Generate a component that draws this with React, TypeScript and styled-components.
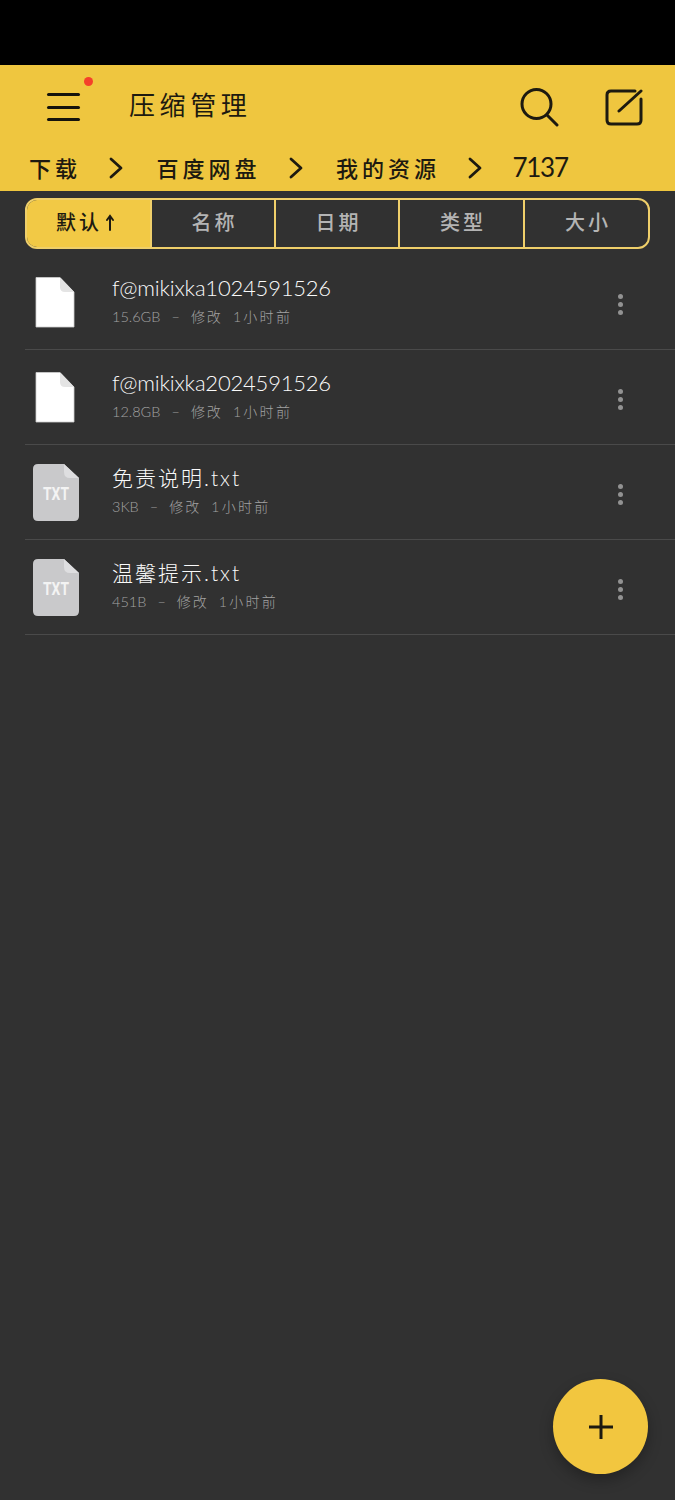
import React from "react";
import styled, { createGlobalStyle } from "styled-components";

const Global = createGlobalStyle`
  html, body { margin: 0; padding: 0; background: #313131; }
  * { box-sizing: border-box; }
`;

const CJK = `"Noto Sans CJK SC", "Noto Sans", sans-serif`;
const LATIN = `Lato, "Noto Sans CJK SC", sans-serif`;

const Page = styled.div`
  position: relative;
  width: 675px;
  height: 1500px;
  overflow: hidden;
  background: #313131;
  font-family: ${CJK};
`;
const StatusBar = styled.div`
  height: 65px;
  background: #000;
`;
const Header = styled.header`
  height: 126px;
  background: #efc63f;
  color: #1d1a10;
  display: flex;
  flex-direction: column;
`;
const TopRow = styled.div`
  height: 83px;
  display: flex;
  align-items: center;
  padding: 0 32px 0 47px;
`;
const MenuButton = styled.div`
  position: relative;
  width: 33px;
  height: 28px;
  display: flex;
  flex-direction: column;
  justify-content: space-between;
  margin-top: 1px;
`;
const MenuLine = styled.span`
  display: block;
  height: 3px;
  border-radius: 2px;
  background: #15130c;
`;
const Dot = styled.span`
  position: absolute;
  top: -16px;
  left: 37px;
  width: 9px;
  height: 9px;
  border-radius: 50%;
  background: #f4402a;
`;
const Title = styled.h1`
  margin: -5px 0 0 49px;
  font-size: 26px;
  font-weight: 400;
  letter-spacing: 4.6px;
  line-height: 34px;
  flex: 1;
`;
const IconButton = styled.div`
  width: 40px;
  height: 40px;
  margin-left: 44px;
  svg { display: block; }
`;
const Crumbs = styled.nav`
  height: 43px;
  display: flex;
  align-items: center;
  padding-left: 29px;
  margin-top: -3px;
`;
const Crumb = styled.span`
  font-size: 22px;
  font-weight: 500;
  letter-spacing: 4px;
  line-height: 30px;
  white-space: nowrap;
`;
const CrumbNumber = styled.span`
  font-family: ${LATIN};
  font-size: 26px;
  font-weight: 400;
  letter-spacing: -1.3px;
  line-height: 30px;
  margin-left: -3px;
`;
const Chevron = styled.svg`
  width: 14px;
  height: 22px;
  margin: 3px 33.500px 0 28px;
  flex: none;
`;
const Tabs = styled.div`
  display: flex;
  width: 625px;
  height: 51px;
  margin: 7px 0 0 25px;
  border: 2px solid #efcf6a;
  border-radius: 12px;
  overflow: hidden;
`;
const Tab = styled.div<{ $active?: boolean; $width: number }>`
  width: ${(p) => p.$width}px;
  flex: none;
  display: flex;
  align-items: center;
  justify-content: center;
  padding: 0 ${(p) => (p.$active ? 6 : 0)}px 4px ${(p) => (p.$active ? 0 : 3)}px;
  font-size: 20px;
  font-weight: 500;
  letter-spacing: 3px;
  color: ${(p) => (p.$active ? "#1d1a10" : "#b4b4b4")};
  background: ${(p) => (p.$active ? "#f2c945" : "transparent")};
  & + & { border-left: 2px solid #efcf6a; }
`;
const Arrow = styled.svg`
  width: 10px;
  height: 18px;
  margin: 3px 0 0 3px;
`;
const List = styled.div`
  margin-top: 6px;
  padding-left: 25px;
`;
const Row = styled.div`
  height: 95px;
  display: flex;
  align-items: center;
  border-bottom: 1.500px solid #4a4a4a;
`;
const IconCell = styled.div`
  width: 87px;
  padding-left: 8px;
  flex: none;
  svg { display: block; }
`;
const Info = styled.div`
  flex: 1;
  min-width: 0;
  margin-top: -5px;
`;
const Name = styled.div<{ $cjk?: boolean }>`
  font-family: ${LATIN};
  font-size: ${(p) => (p.$cjk ? 21 : 22)}px;
  font-weight: 300;
  letter-spacing: ${(p) => (p.$cjk ? 2 : -0.2)}px;
  line-height: 32px;
  color: #fafafa;
  white-space: nowrap;
`;
const Meta = styled.div`
  font-family: ${LATIN};
  font-size: 14.500px;
  font-weight: 300;
  line-height: 22px;
  color: #a2a2a2;
  margin-top: 2px;
  display: flex;
  white-space: nowrap;
`;
const MetaDash = styled.span`
  margin: 0 11px;
`;
const MetaChanged = styled.span`
  font-size: 14px;
  margin-right: 10px;
  letter-spacing: 2px;
`;
const MetaTime = styled.span`
  font-size: 14px;
  letter-spacing: 2.300px;
`;
const More = styled.div`
  width: 5px;
  height: 21px;
  margin: 4px 52px 0 0;
  display: flex;
  flex-direction: column;
  justify-content: space-between;
  flex: none;
`;
const MoreDot = styled.span`
  width: 5px;
  height: 5px;
  border-radius: 50%;
  background: #929292;
`;
const Fab = styled.button`
  position: absolute;
  left: 553px;
  top: 1379px;
  width: 95px;
  height: 95px;
  padding: 0;
  border: 0;
  border-radius: 50%;
  background: #f2c63f;
  box-shadow: 0 6px 14px rgba(0, 0, 0, 0.28);
  display: flex;
  align-items: center;
  justify-content: center;
`;

const BlankFile = () => (
  <svg width="40" height="52" viewBox="0 0 40 52" style={{ marginLeft: 2 }}>
    <path d="M1 1.500H25L39 16V51H1Z" fill="#fff" stroke="#cfcfcf" strokeWidth="0.800" />
    <path d="M25 1.500L39 16H30Q25 16 25 11Z" fill="#e4e4e4" />
  </svg>
);

const TxtFile = () => (
  <svg width="46" height="57" viewBox="0 0 46 57">
    <path d="M5 0H31L46 14V52Q46 57 41 57H5Q0 57 0 52V5Q0 0 5 0Z" fill="#c9c9cb" />
    <path d="M31 0L46 14H37Q31 14 31 8Z" fill="#dedee0" />
    <text
      x="23"
      y="36"
      textAnchor="middle"
      textLength="26"
      lengthAdjust="spacingAndGlyphs"
      fontFamily="Roboto, sans-serif"
      fontSize="18"
      fontWeight="700"
      fill="#f3f3f3"
    >
      TXT
    </text>
  </svg>
);

type Item = { name: string; size: string; kind: "blank" | "txt"; cjk?: boolean };
const items: Item[] = [
  { name: "f@mikixka1024591526", size: "15.6GB", kind: "blank" },
  { name: "f@mikixka2024591526", size: "12.8GB", kind: "blank" },
  { name: "免责说明.txt", size: "3KB", kind: "txt", cjk: true },
  { name: "温馨提示.txt", size: "451B", kind: "txt", cjk: true },
];

const crumbs = ["下载", "百度网盘", "我的资源"];

export default function App() {
  return (
    <Page>
      <Global />
      <StatusBar />
      <Header>
        <TopRow>
          <MenuButton>
            <MenuLine />
            <MenuLine />
            <MenuLine />
            <Dot />
          </MenuButton>
          <Title>压缩管理</Title>
          <IconButton>
            <svg width="40" height="40" viewBox="0 0 40 40" fill="none" stroke="#1d1a10" strokeWidth="3" strokeLinecap="round">
              <circle cx="17.500" cy="17" r="14.500" />
              <path d="M28 28L38 38" />
            </svg>
          </IconButton>
          <IconButton>
            <svg width="40" height="40" viewBox="0 0 40 40" fill="none" stroke="#1d1a10" strokeWidth="3" strokeLinecap="round" strokeLinejoin="round">
              <path d="M32 4H8Q4 4 4 8V33Q4 37 8 37H34Q38 37 38 33V12" />
              <path d="M16 24L38 4" />
            </svg>
          </IconButton>
        </TopRow>
        <Crumbs>
          {crumbs.map((c) => (
            <React.Fragment key={c}>
              <Crumb>{c}</Crumb>
              <Chevron viewBox="0 0 14 22" fill="none" stroke="#1d1a10" strokeWidth="2.800" strokeLinecap="round" strokeLinejoin="round">
                <path d="M2 2L12 11L2 20" />
              </Chevron>
            </React.Fragment>
          ))}
          <CrumbNumber>7137</CrumbNumber>
        </Crumbs>
      </Header>
      <Tabs>
        <Tab $active $width={123}>
          默认
          <Arrow viewBox="0 0 10 18" fill="none" stroke="#1d1a10" strokeWidth="2" strokeLinecap="round">
            <path d="M5 16V3M2 6L5 2L8 6" />
          </Arrow>
        </Tab>
        <Tab $width={124}>名称</Tab>
        <Tab $width={124}>日期</Tab>
        <Tab $width={125}>类型</Tab>
        <Tab $width={125}>大小</Tab>
      </Tabs>
      <List>
        {items.map((it) => (
          <Row key={it.name}>
            <IconCell>{it.kind === "blank" ? <BlankFile /> : <TxtFile />}</IconCell>
            <Info>
              <Name $cjk={it.cjk}>{it.name}</Name>
              <Meta>
                <span>{it.size}</span>
                <MetaDash>–</MetaDash>
                <MetaChanged>修改</MetaChanged>
                <MetaTime>1小时前</MetaTime>
              </Meta>
            </Info>
            <More>
              <MoreDot />
              <MoreDot />
              <MoreDot />
            </More>
          </Row>
        ))}
      </List>
      <Fab aria-label="add">
        <svg width="24" height="24" viewBox="0 0 24 24" stroke="#1d1a10" strokeWidth="3">
          <path d="M0 12H24M12 0V24" />
        </svg>
      </Fab>
    </Page>
  );
}
